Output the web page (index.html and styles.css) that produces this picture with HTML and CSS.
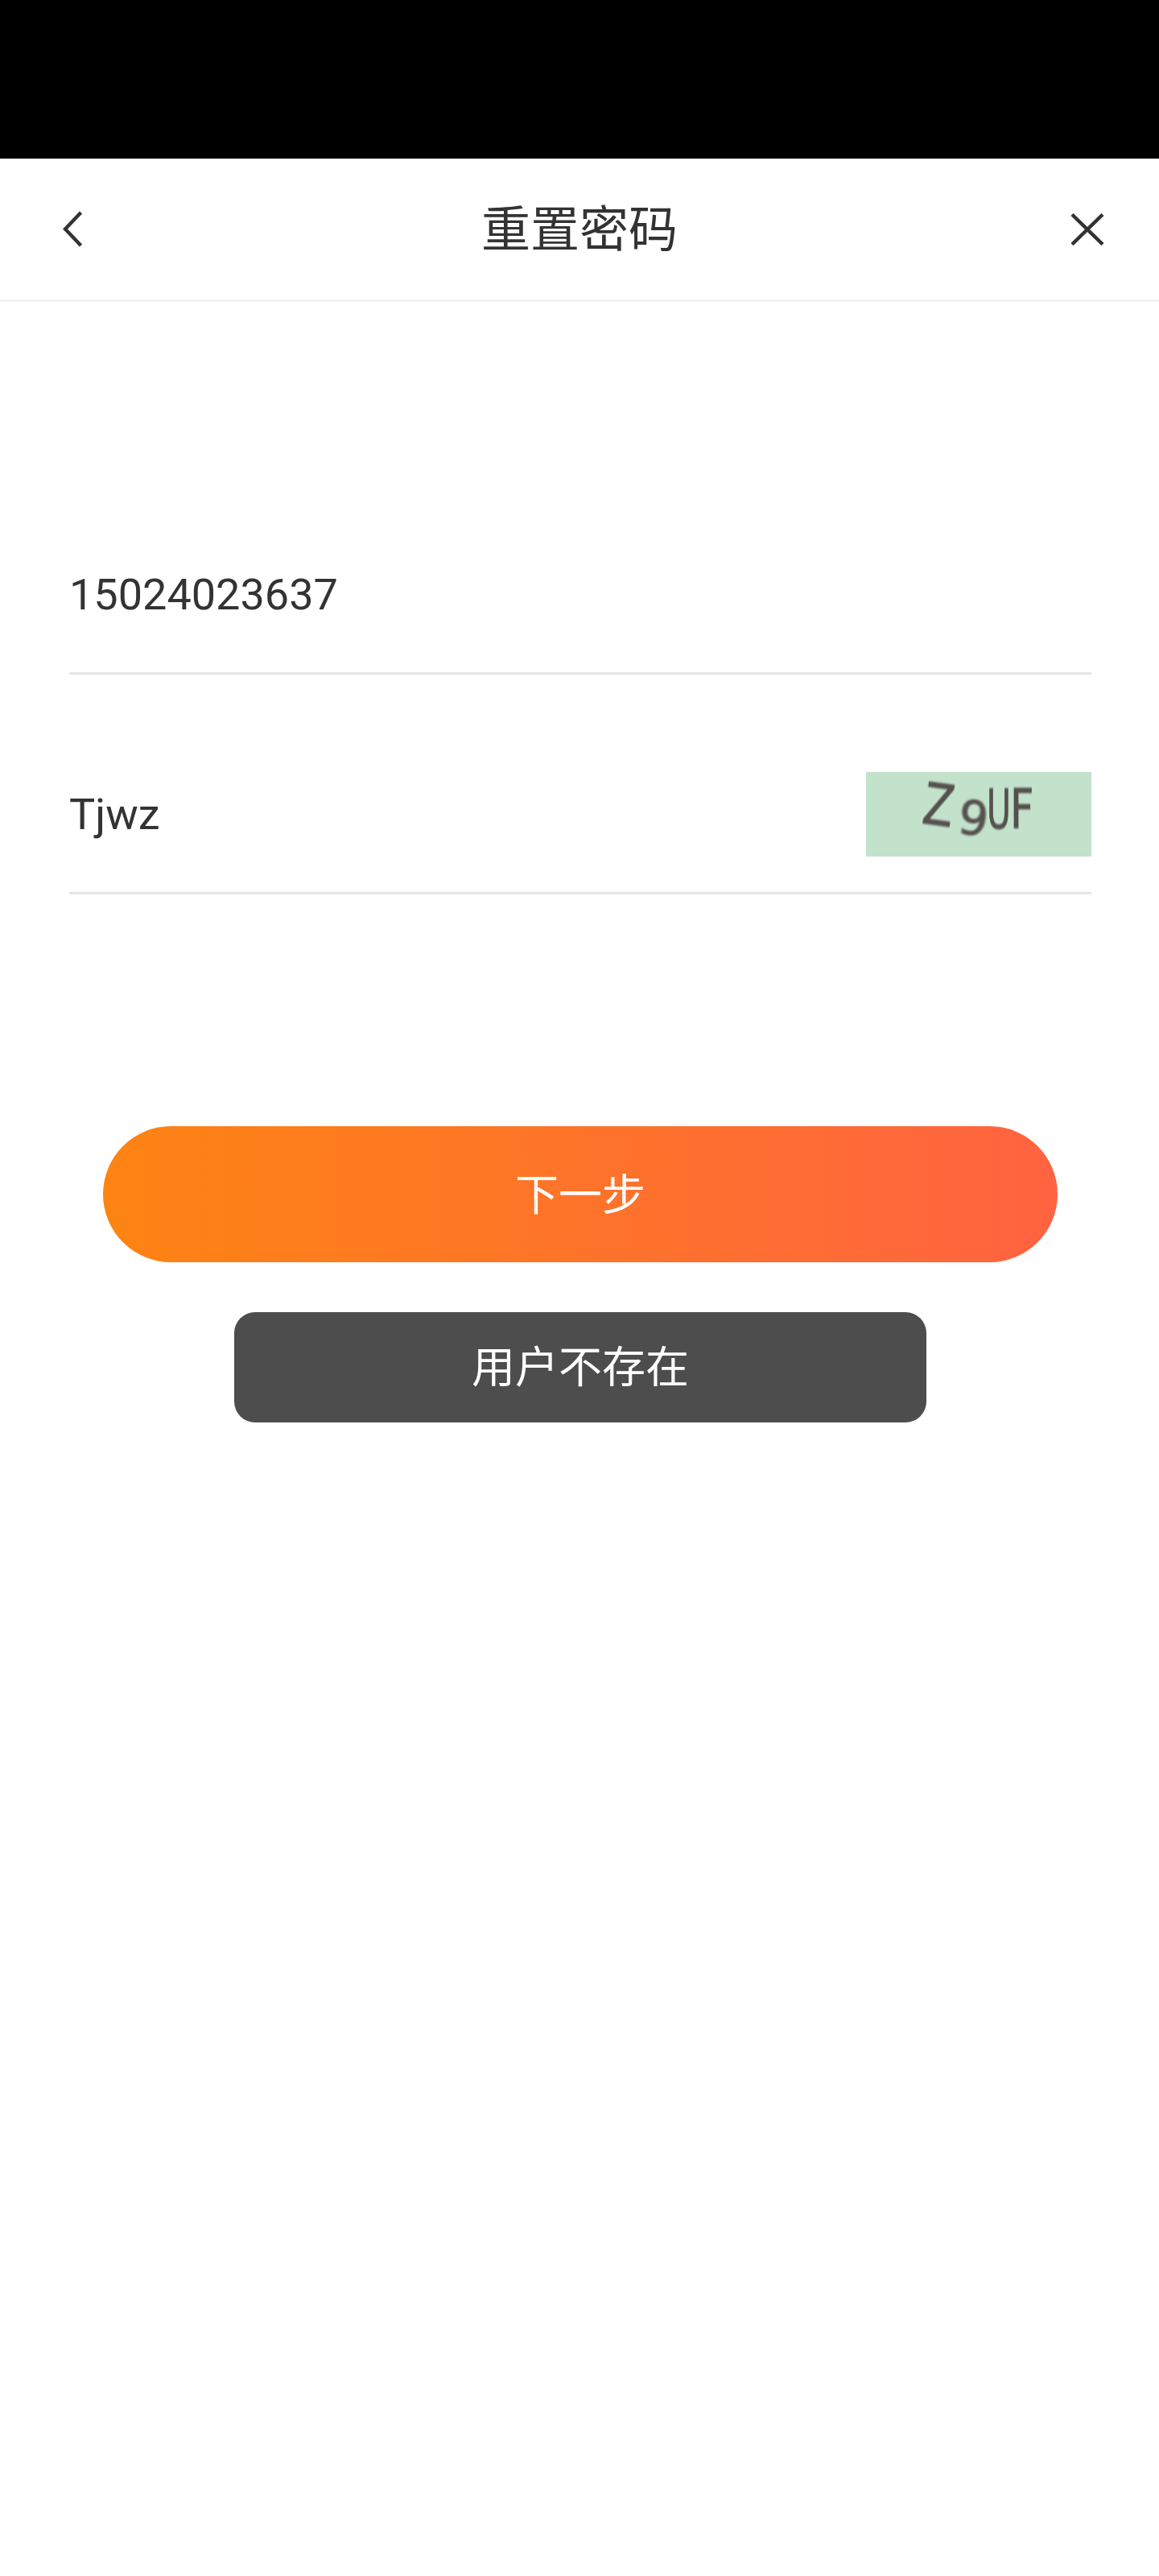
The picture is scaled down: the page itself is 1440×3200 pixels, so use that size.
FILE: index.html
```html
<!DOCTYPE html>
<html lang="zh-CN">
<head>
  <meta charset="UTF-8"/>
  <meta name="viewport" content="width=device-width,initial-scale=1.0"/>
  <title>重置密码</title>
  <link rel="stylesheet" href="styles.css">
</head>
<body>
  <div class="status-bar"></div>

  <header class="nav-bar">
    <button class="nav-btn" aria-label="back">
      <svg class="back-icon" viewBox="0 0 25 45">
        <path d="M22.5 2 L3 22.5 L22.5 43"/>
      </svg>
    </button>
    <h1>重置密码</h1>
    <button class="nav-btn" aria-label="close">
      <svg class="close-icon" viewBox="0 0 42 40">
        <path d="M2 1.5 L40 38.5 M40 1.5 L2 38.5"/>
      </svg>
    </button>
  </header>

  <main class="form">
    <div class="field">
      <span class="field-value">15024023637</span>
    </div>
    <div class="field">
      <span class="field-value">Tjwz</span>
      <div class="captcha">
        <span class="c-z">Z</span><span class="c-9">9</span><span class="c-u">U</span><span class="c-f">F</span>
      </div>
    </div>
    <button class="next-btn">下一步</button>
    <div class="toast">用户不存在</div>
  </main>
</body>
</html>
```

FILE: styles.css
```css
:root {
  --text: #333;
  --line: #e6e6e6;
}
* { box-sizing: border-box; }
body {
  margin: 0;
  background: #fff;
  color: var(--text);
  font-family: Roboto, "Noto Sans CJK SC", sans-serif;
}

.status-bar { height: 197px; background: #000; }

.nav-bar {
  display: flex; align-items: center; justify-content: space-between;
  height: 178px;
  padding: 0 69px;
  border-bottom: 3px solid #f2f2f2;
}
.nav-bar h1 {
  margin: 0;
  padding-top: 3px;
  font-size: 61px;
  font-weight: 400;
  line-height: 80px;
}
.nav-btn {
  display: flex;
  width: 40px;
  padding: 0;
  background: none;
  border: none;
}
.nav-btn svg {
  flex: none;
  fill: none;
  stroke: var(--text);
  stroke-width: 4.5;
}
.back-icon { width: 25px; height: 45px; margin-left: 9px; }
.close-icon { width: 42px; height: 40px; margin-left: -1px; }

.form { padding: 190px 84px 0 86px; }

.field {
  display: flex; align-items: center; justify-content: space-between;
  height: 273px;
  padding-top: 121px;
  padding-bottom: 44px;
  border-bottom: 3px solid var(--line);
}
.field-value {
  font-size: 54px;
  line-height: 64px;
}

.captcha {
  display: flex; align-items: flex-start;
  width: 280px;
  height: 105px;
  padding-left: 66px;
  background: #c3e2cb;
  color: #56514e;
  font-family: "DejaVu Sans", sans-serif;
  line-height: 1;
  -webkit-text-stroke: 1px #56514e;
}
.captcha span { display: block; filter: blur(1px); }
.c-z { font-size: 71px; margin-top: 6px; transform: rotate(8deg) scaleX(0.78); }
.c-9 { font-size: 58px; margin-top: 29px; transform: rotate(8deg); }
.c-u { font-size: 68px; margin: 13px 0 0 -22px; transform: scaleX(0.6); transform-origin: right; }
.c-f { font-size: 68px; margin-top: 13px; transform: scaleX(0.75); transform-origin: left; }

.next-btn {
  display: block;
  width: 1186px;
  height: 169px;
  margin: 288px 0 0 42px;
  padding: 0 0 6px;
  background: linear-gradient(90deg, #fd8413, #ff6340);
  border: none;
  border-radius: 85px;
  color: #fff;
  font-family: inherit;
  font-size: 54px;
}

.toast {
  display: flex; align-items: center; justify-content: center;
  width: 860px;
  height: 137px;
  margin: 62px 0 0 205px;
  padding-bottom: 9px;
  background: #4d4d4d;
  border-radius: 26px;
  color: #fff;
  font-size: 54px;
}
```
